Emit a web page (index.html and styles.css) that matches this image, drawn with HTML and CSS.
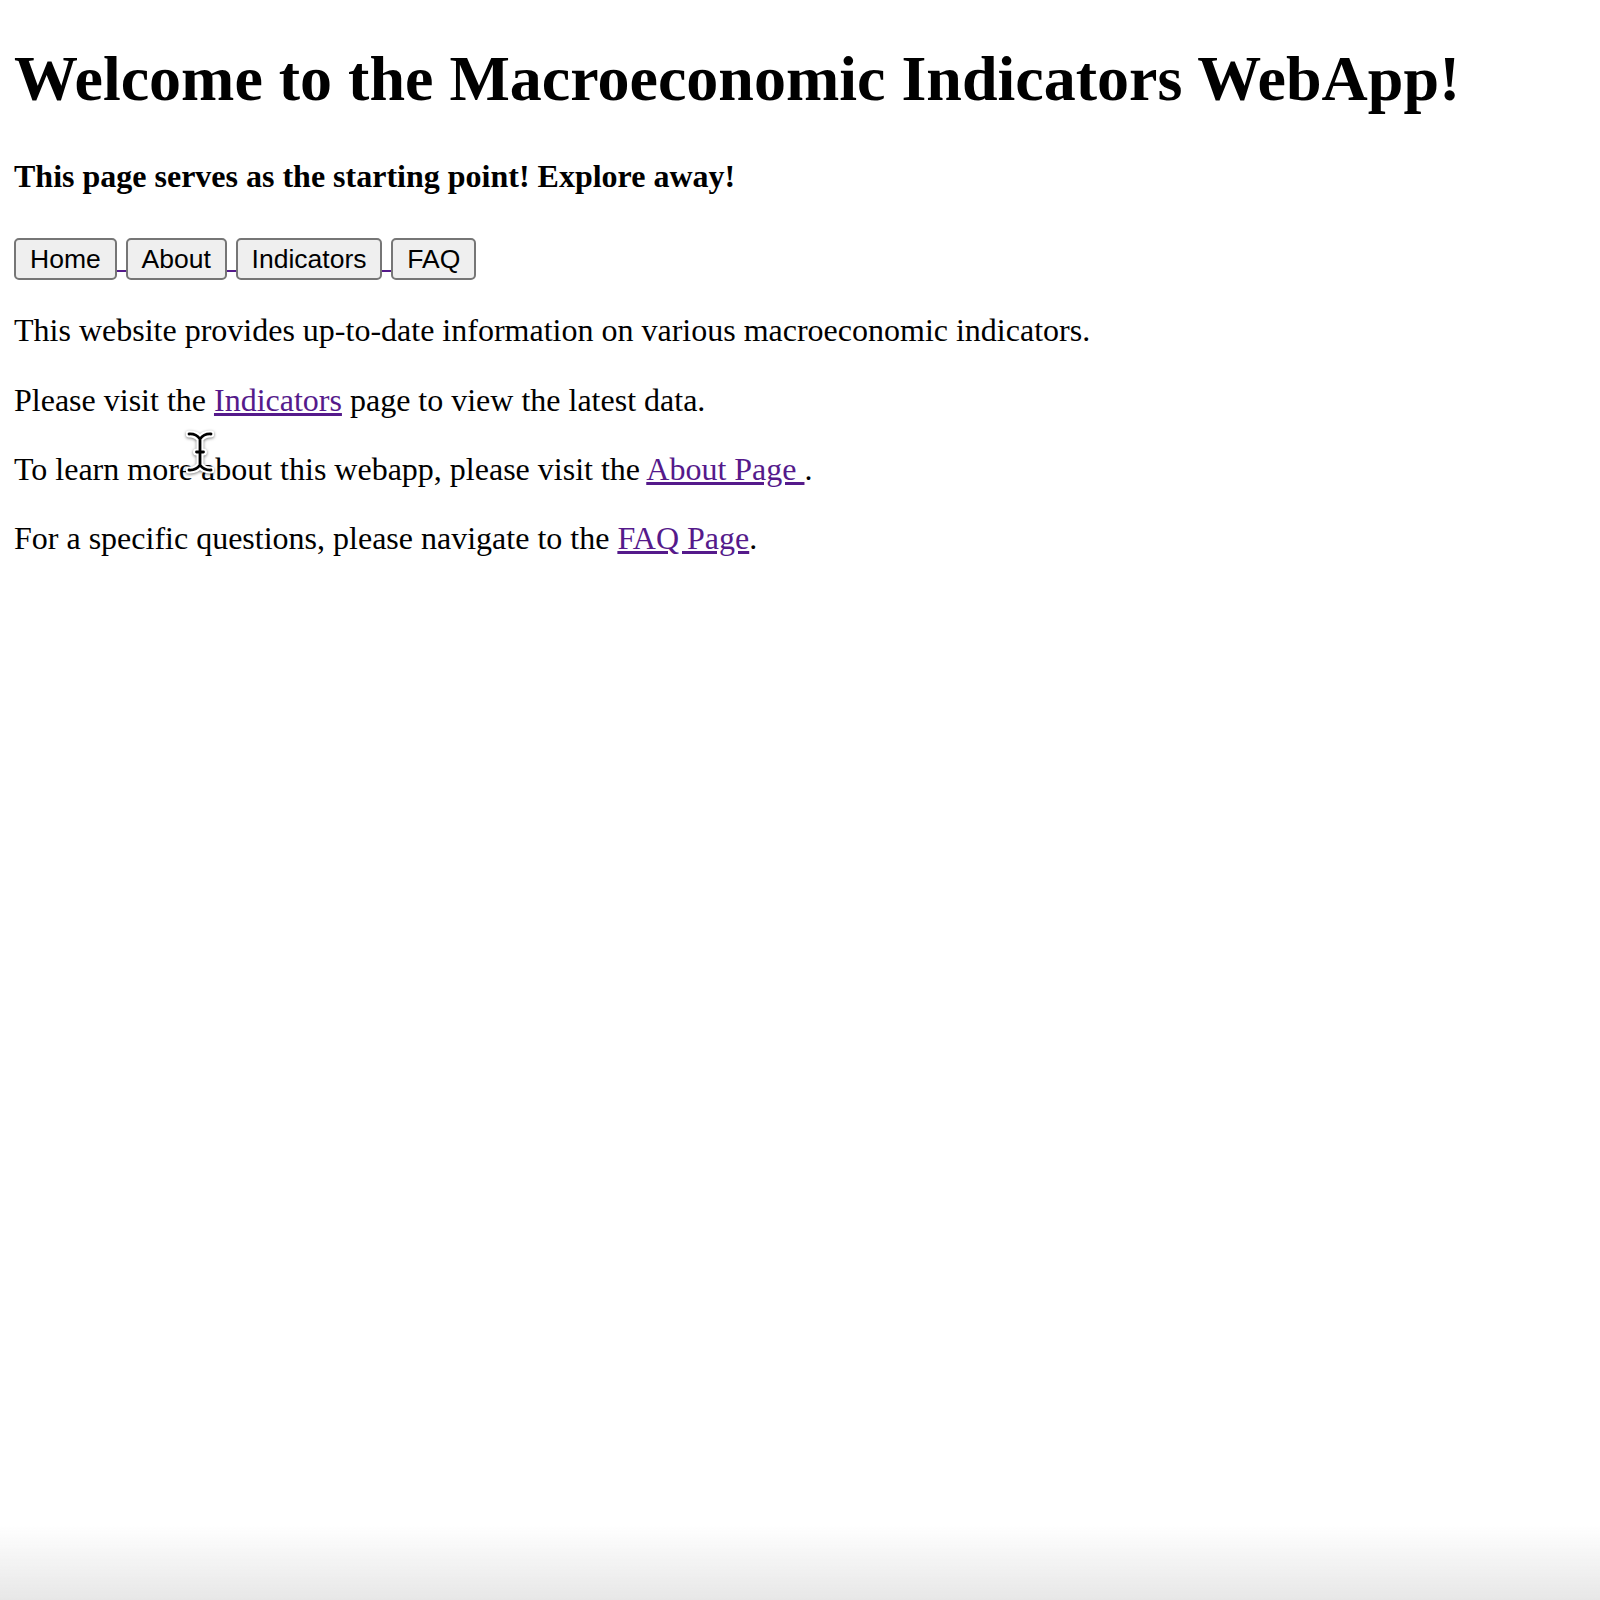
FILE: index.html
```html
<!DOCTYPE html>
<html lang="en">
<head>
<meta charset="utf-8">
<title>Macroeconomic Indicators WebApp</title>
<link rel="stylesheet" href="styles.css">
</head>
<body>
<main class="page">
  <h1 class="title">Welcome to the Macroeconomic Indicators WebApp!</h1>
  <h4 class="subtitle">This page serves as the starting point! Explore away!</h4>
  <nav class="nav">
    <a class="nav-link" href="#"><button class="nav-btn" type="button">Home</button><span class="nav-space"></span></a>
    <a class="nav-link" href="#"><button class="nav-btn" type="button">About</button><span class="nav-space"></span></a>
    <a class="nav-link" href="#"><button class="nav-btn" type="button">Indicators</button><span class="nav-space"></span></a>
    <a class="nav-link" href="#"><button class="nav-btn" type="button">FAQ</button></a>
  </nav>
  <p class="text">This website provides up-to-date information on various macroeconomic indicators.</p>
  <p class="text">Please visit the <a class="link" href="#">Indicators</a> page to view the latest data.</p>
  <p class="text">To learn more about this webapp, please visit the <a class="link" href="#">About Page </a>.</p>
  <p class="text">For a specific questions, please navigate to the <a class="link" href="#">FAQ Page</a>.</p>
</main>
<svg class="cursor" width="28" height="44" viewBox="0 0 28 44" aria-hidden="true">
  <g fill="none" stroke-linecap="round" stroke-linejoin="round">
    <path d="M3 4 Q10 3.5 14 9 Q18 3.5 25 4 M14 9 V35 M3 40 Q10 40.5 14 35 Q18 40.5 25 40 M10.5 22 H17.5" stroke="#ffffff" stroke-width="7"/>
    <path d="M3 4 Q10 3.5 14 9 Q18 3.5 25 4 M14 9 V35 M3 40 Q10 40.5 14 35 Q18 40.5 25 40 M10.5 22 H17.5" stroke="#000000" stroke-width="2.8"/>
  </g>
</svg>
<div class="bottom-shade"></div>
</body>
</html>
```
FILE: styles.css
```css
html, body {
  margin: 0;
  padding: 0;
  background: #ffffff;
}

body {
  font-family: "Liberation Serif", "Times New Roman", serif;
  color: #000000;
  min-height: 1600px;
}

.page {
  padding: 0 14px;
  display: flow-root;
}

.title {
  font-size: 64px;
  font-weight: bold;
  line-height: 73px;
  margin: 42px 0 42.5px;
}

.subtitle {
  font-size: 32px;
  font-weight: bold;
  line-height: 37.3px;
  margin: 43px 0 43px;
}

.nav {
  display: flex;
  align-items: flex-start;
  margin: 0;
}

.nav-link {
  display: flex;
  align-items: flex-start;
  color: #551a8b;
  text-decoration: none;
}

.nav-btn {
  font-family: "Liberation Sans", Arial, Helvetica, sans-serif;
  font-size: 26.5px;
  line-height: 30px;
  height: 42px;
  padding: 3px 14px;
  border: 2px solid #767676;
  border-radius: 5px;
  background: #efefef;
  color: #000000;
  margin: 0;
}

.nav-space {
  width: 8.8px;
  height: 2px;
  margin-top: 32px;
  background: #551a8b;
}

.text {
  font-size: 32px;
  line-height: 37.3px;
  margin: 32px 0;
}

.link {
  color: #551a8b;
  text-decoration: underline;
}

.cursor {
  position: absolute;
  left: 186px;
  top: 430px;
  filter: drop-shadow(0 1px 1.5px rgba(0, 0, 0, 0.5));
}

.bottom-shade {
  position: fixed;
  left: 0;
  right: 0;
  bottom: 0;
  height: 75px;
  background: linear-gradient(to bottom, rgba(255, 255, 255, 0), rgba(225, 225, 225, 0.8));
  pointer-events: none;
}
```
